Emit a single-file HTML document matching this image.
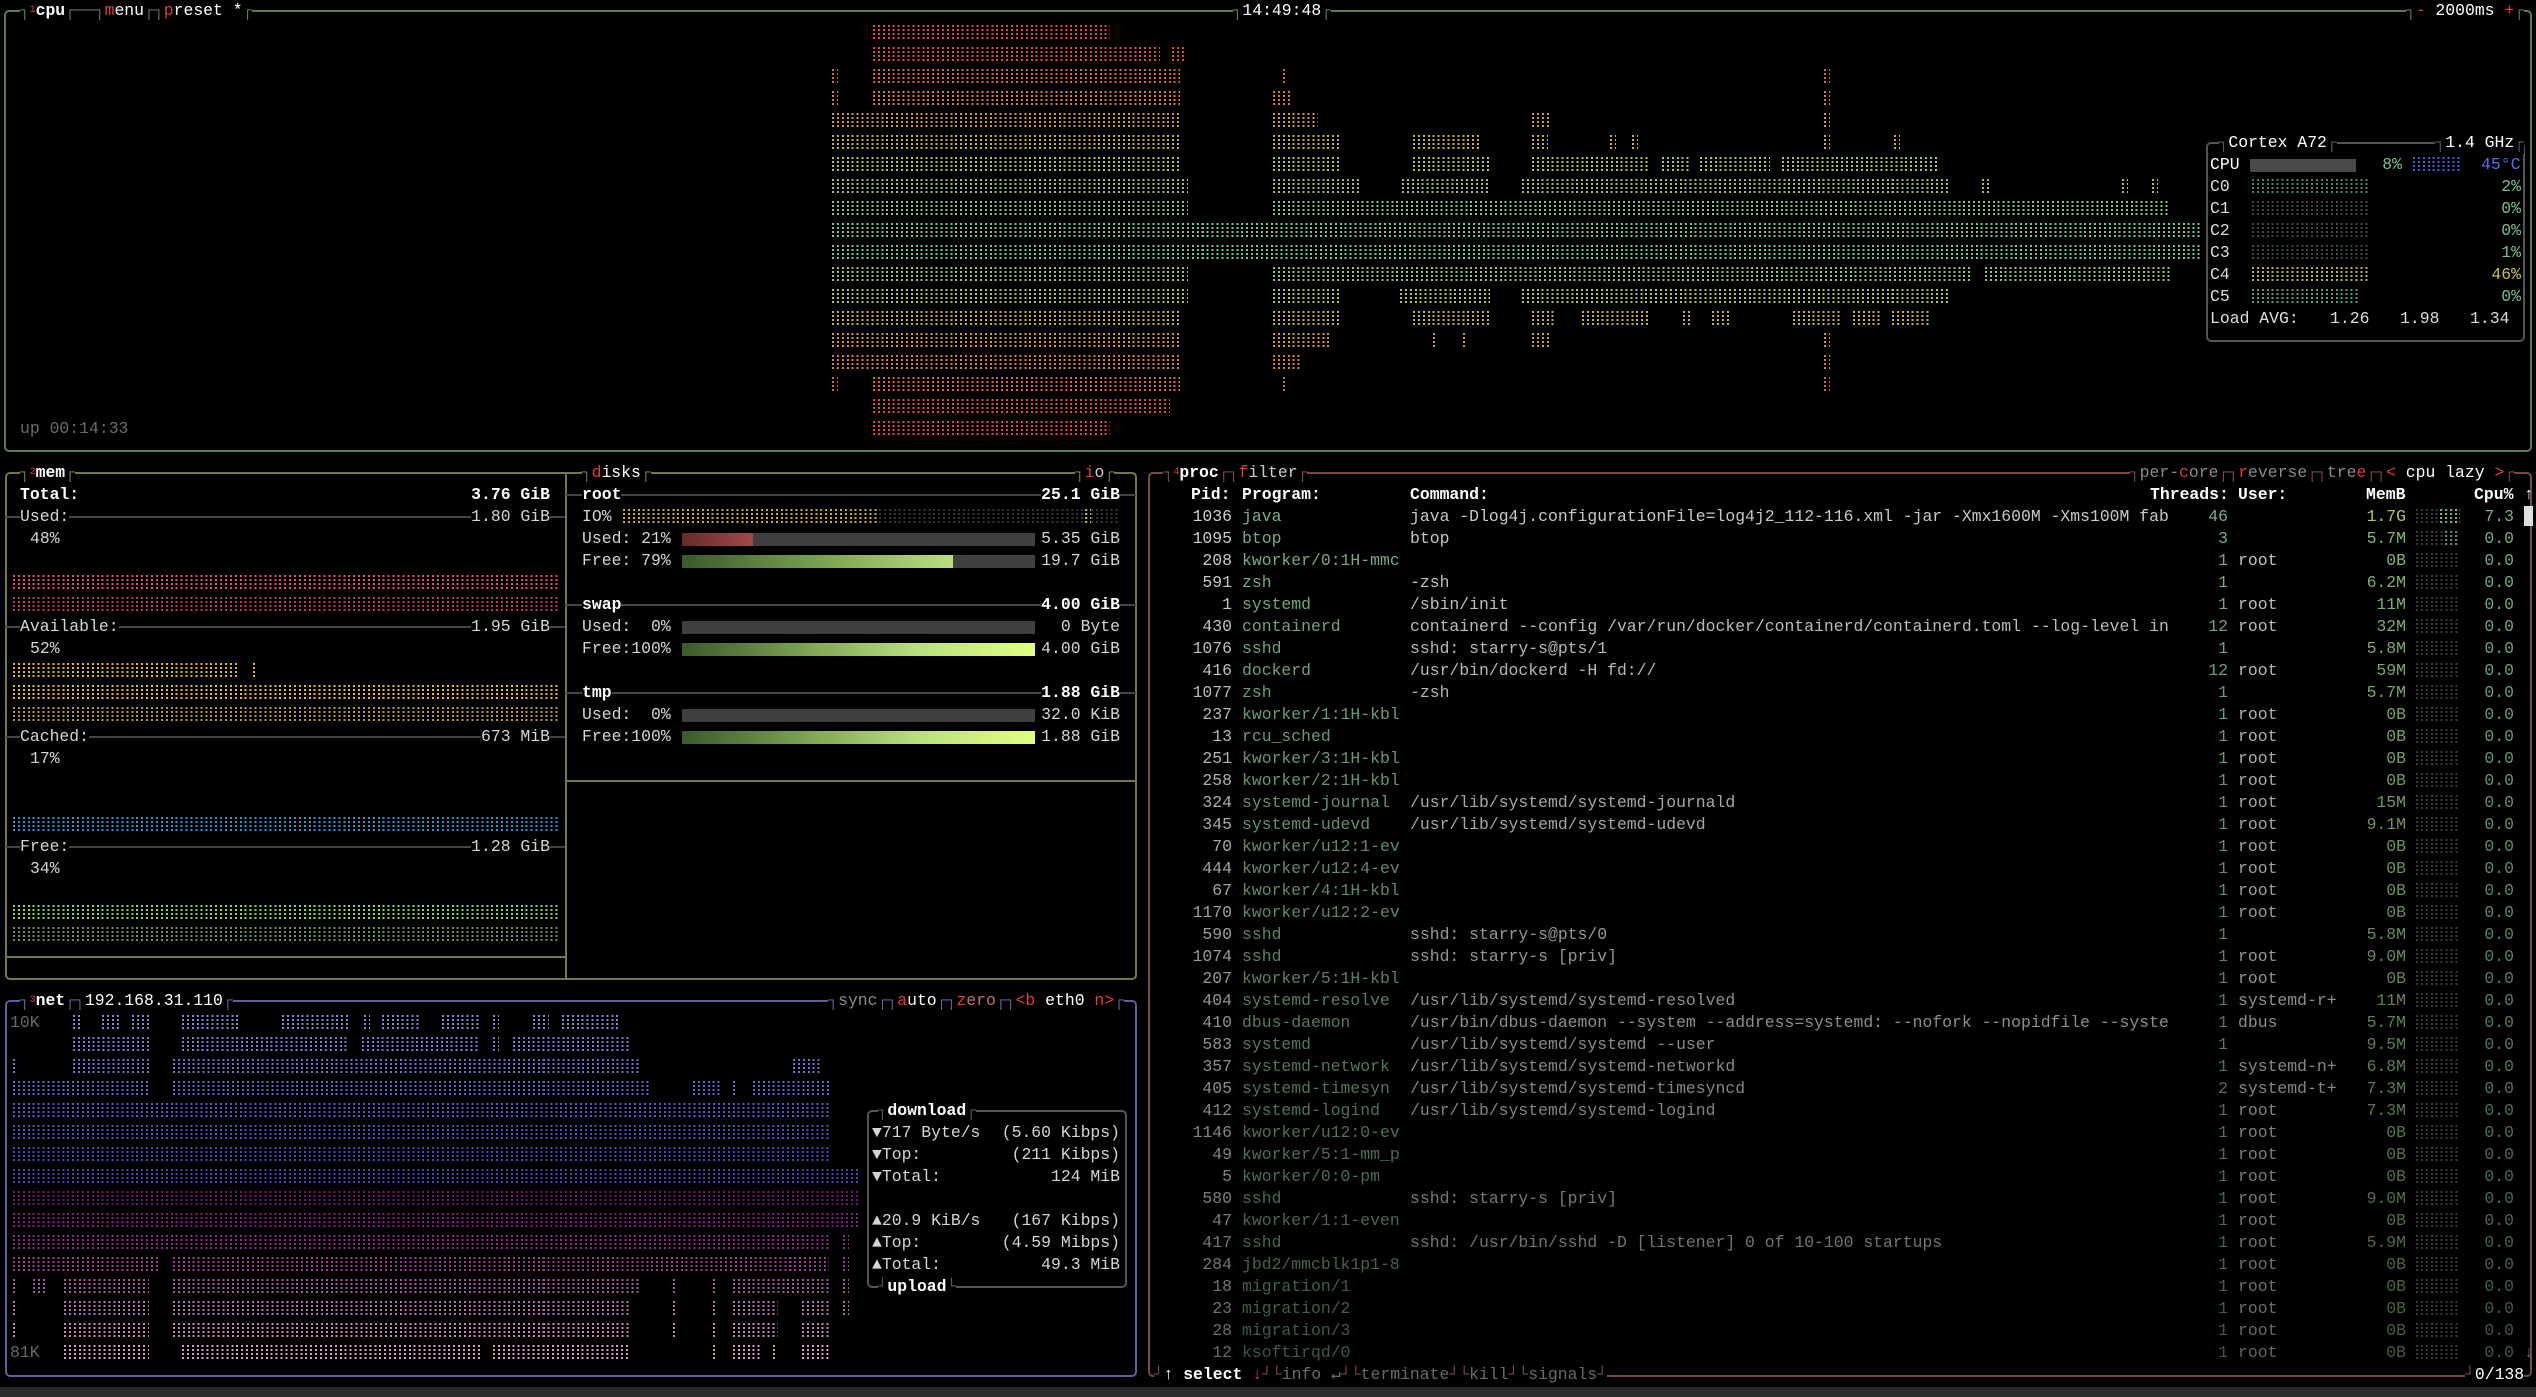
<!DOCTYPE html>
<html><head><meta charset="utf-8">
<style>
html,body{margin:0;padding:0}
body{background:#000;width:2536px;height:1397px;overflow:hidden;position:relative;font:16.43px/22px "Liberation Mono","DejaVu Sans Mono",monospace;color:#d4d4d4}
.t{position:absolute;white-space:pre;left:calc(var(--c)*9.86px);top:calc(var(--r)*22px)}
.p{position:absolute;white-space:pre}
.bx{position:absolute;border:2px solid;border-radius:5px;box-sizing:border-box}
.hl{position:absolute;height:2px}
.vl{position:absolute;width:2px}
.k{background:#000}
.w{color:#fff;font-weight:bold}
.red{color:#e03c3c}
.g{color:#8a8a8a}
.dg{color:#6a6a6a}
.br{position:absolute;height:16px;
 background:repeating-linear-gradient(90deg,var(--col) 0 2px,transparent 2px 4.93px);
 -webkit-mask-image:repeating-linear-gradient(180deg,#000 0 2px,transparent 2px 4px);
 mask-image:repeating-linear-gradient(180deg,#000 0 2px,transparent 2px 4px)}
.bar{position:absolute;height:13px}
.row{position:absolute;left:0;width:2536px;height:22px}
.row span{position:absolute;white-space:pre;top:0}
.pid{left:1140px;width:92px;text-align:right;color:#d0d0d0}
.prg{left:1242px;color:#78b088}
.cmd{left:1410px;color:#c8c8c8}
.thr{left:2150px;width:78px;text-align:right;color:#78b088}
.usr{left:2238px;color:#c8c8c8}
.mem{left:2330px;width:76px;text-align:right;color:#88b878}
.cpu{left:2470px;width:44px;text-align:right;color:#78b088}
</style></head><body>

<div class="bx" style="left:4px;top:10px;width:2528px;height:442px;border-color:#5a7a5a"></div>
<div class="bx" style="left:5px;top:472px;width:1132px;height:508px;border-color:#77774a"></div>
<div class="vl" style="left:565px;top:473px;height:506px;background:#77774a"></div>
<div class="hl" style="left:6px;top:956px;width:560px;background:#77774a"></div>
<div class="hl" style="left:566px;top:780px;width:570px;background:#77774a"></div>
<div class="bx" style="left:5px;top:1000px;width:1132px;height:377px;border-color:#5f5f99"></div>
<div class="bx" style="left:1148px;top:472px;width:1384px;height:905px;border-color:#7a4848"></div>
<div class="bx" style="left:2206px;top:142px;width:319px;height:200px;border-color:#555"></div>
<div class="bx" style="left:867px;top:1110px;width:260px;height:178px;border-color:#555"></div>
<div style="position:absolute;left:0;top:1387px;width:2536px;height:10px;background:#2a2a2a"></div>

<div class="t k" style="--c:2;--r:0;color:#5a7a5a">┐<span class="red" style="font-size:10px;vertical-align:top">1</span><span class="w">cpu</span>┌──┐<span class="red">m</span><span style="color:#fff">enu</span>┌┐<span class="red">p</span><span style="color:#fff">reset *</span>┌</div>
<div class="t k" style="--c:125;--r:0;color:#5a7a5a">┐<span style="color:#fff">14:49:48</span>┌</div>
<div class="t k" style="--c:244;--r:0;color:#5a7a5a">┐<span class="red">-</span> <span style="color:#fff">2000ms</span> <span class="red">+</span>┌</div>
<div class="p" style="left:20px;top:418px;color:#6a6a6a">up 00:14:33</div>

<div class="t k" style="--c:225;--r:6;color:#555">┐<span style="color:#fff">Cortex A72</span>┌</div>
<div class="t k" style="--c:247;--r:6;color:#555">┐<span style="color:#fff">1.4 GHz</span>┌</div>
<div class="p" style="left:2210px;top:154px;color:#fff">CPU</div>
<div class="bar" style="left:2250px;top:159px;width:106px;background:#4a4a4a"></div>
<div class="p" style="right:134px;top:154px;color:#78c090">8%</div>
<div class="p" style="left:2481px;top:154px;color:#5070f0">45°C</div>
<div class="p" style="left:2210px;top:176px;color:#ddd">C0</div><div class="p" style="right:15px;top:176px;color:#78c090">2%</div>
<div class="p" style="left:2210px;top:198px;color:#ddd">C1</div><div class="p" style="right:15px;top:198px;color:#78c090">0%</div>
<div class="p" style="left:2210px;top:220px;color:#ddd">C2</div><div class="p" style="right:15px;top:220px;color:#78c090">0%</div>
<div class="p" style="left:2210px;top:242px;color:#ddd">C3</div><div class="p" style="right:15px;top:242px;color:#78c090">1%</div>
<div class="p" style="left:2210px;top:264px;color:#ddd">C4</div><div class="p" style="right:15px;top:264px;color:#c8c060">46%</div>
<div class="p" style="left:2210px;top:286px;color:#ddd">C5</div><div class="p" style="right:15px;top:286px;color:#78c090">0%</div>
<div class="p" style="left:2210px;top:308px;color:#ddd">Load AVG:</div>
<div class="p" style="left:2330px;top:308px;color:#ddd">1.26</div>
<div class="p" style="left:2400px;top:308px;color:#ddd">1.98</div>
<div class="p" style="left:2470px;top:308px;color:#ddd">1.34</div>

<div class="t k" style="--c:2;--r:21;color:#77774a">┐<span class="red" style="font-size:10px;vertical-align:top">2</span><span class="w">mem</span>┌</div>
<div class="p w" style="left:20px;top:484px">Total:</div>
<div class="p w" style="right:1986px;top:484px">3.76 GiB</div>
<div class="hl" style="left:6px;top:516px;width:559px;background:#444"></div>
<div class="p k" style="left:20px;top:506px">Used:</div><div class="p k" style="right:1986px;top:506px">1.80 GiB</div>
<div class="p" style="left:30px;top:528px">48%</div>
<div class="hl" style="left:6px;top:626px;width:559px;background:#444"></div>
<div class="p k" style="left:20px;top:616px">Available:</div><div class="p k" style="right:1986px;top:616px">1.95 GiB</div>
<div class="p" style="left:30px;top:638px">52%</div>
<div class="hl" style="left:6px;top:736px;width:559px;background:#444"></div>
<div class="p k" style="left:20px;top:726px">Cached:</div><div class="p k" style="right:1986px;top:726px">673 MiB</div>
<div class="p" style="left:30px;top:748px">17%</div>
<div class="hl" style="left:6px;top:846px;width:559px;background:#444"></div>
<div class="p k" style="left:20px;top:836px">Free:</div><div class="p k" style="right:1986px;top:836px">1.28 GiB</div>
<div class="p" style="left:30px;top:858px">34%</div>

<div class="t k" style="--c:59;--r:21;color:#77774a">┐<span class="red">d</span><span style="color:#fff">isks</span>┌</div>
<div class="t k" style="--c:109;--r:21;color:#77774a">┐<span class="red">i</span><span style="color:#ccc">o</span>┌</div>
<div class="hl" style="left:566px;top:494px;width:570px;background:#444"></div>
<div class="p w k" style="left:582px;top:484px">root</div><div class="p w k" style="right:1416px;top:484px">25.1 GiB</div>
<div class="p" style="left:582px;top:506px">IO%</div>
<div class="p" style="left:582px;top:528px">Used: 21%</div>
<div class="bar" style="left:682px;top:533px;width:353px;background:#404040"></div>
<div class="bar" style="left:682px;top:533px;width:71px;background:linear-gradient(90deg,#6a2a2a,#a04848)"></div>
<div class="p" style="right:1416px;top:528px">5.35 GiB</div>
<div class="p" style="left:582px;top:550px">Free: 79%</div>
<div class="bar" style="left:682px;top:555px;width:353px;background:#404040"></div>
<div class="bar" style="left:682px;top:555px;width:271px;background:linear-gradient(90deg,#3a5a2a,#78a050,#b8e080)"></div>
<div class="p" style="right:1416px;top:550px">19.7 GiB</div>
<div class="hl" style="left:566px;top:604px;width:570px;background:#444"></div>
<div class="p w k" style="left:582px;top:594px">swap</div><div class="p w k" style="right:1416px;top:594px">4.00 GiB</div>
<div class="p" style="left:582px;top:616px">Used:  0%</div>
<div class="bar" style="left:682px;top:621px;width:353px;background:#404040"></div>
<div class="p" style="right:1416px;top:616px">0 Byte</div>
<div class="p" style="left:582px;top:638px">Free:100%</div>
<div class="bar" style="left:682px;top:643px;width:353px;background:linear-gradient(90deg,#3a5a2a,#78a050,#b8e080,#e0ff80)"></div>
<div class="p" style="right:1416px;top:638px">4.00 GiB</div>
<div class="hl" style="left:566px;top:692px;width:570px;background:#444"></div>
<div class="p w k" style="left:582px;top:682px">tmp</div><div class="p w k" style="right:1416px;top:682px">1.88 GiB</div>
<div class="p" style="left:582px;top:704px">Used:  0%</div>
<div class="bar" style="left:682px;top:709px;width:353px;background:#404040"></div>
<div class="p" style="right:1416px;top:704px">32.0 KiB</div>
<div class="p" style="left:582px;top:726px">Free:100%</div>
<div class="bar" style="left:682px;top:731px;width:353px;background:linear-gradient(90deg,#3a5a2a,#78a050,#b8e080,#e0ff80)"></div>
<div class="p" style="right:1416px;top:726px">1.88 GiB</div>

<div class="t k" style="--c:2;--r:45;color:#5f5f99">┐<span class="red" style="font-size:10px;vertical-align:top">3</span><span class="w">net</span>┌┐<span style="color:#fff">192.168.31.110</span>┌</div>
<div class="t k" style="--c:84;--r:45;color:#5f5f99">┐<span class="g">sync</span>┌┐<span class="red">a</span><span style="color:#fff">uto</span>┌┐<span class="red">z</span><span style="color:#c07080">ero</span>┌┐<span class="red">&lt;b</span> <span style="color:#fff">eth0</span> <span class="red">n&gt;</span>┌</div>
<div class="p dg" style="left:10px;top:1012px">10K</div>
<div class="p dg" style="left:10px;top:1342px">81K</div>
<div class="t k" style="--c:89;--r:50;color:#555">┐<span class="w">download</span>┌</div>
<div class="t k" style="--c:89;--r:58;color:#555">┘<span class="w">upload</span>└</div>
<div class="p" style="left:872px;top:1122px">▼717 Byte/s</div><div class="p" style="right:1416px;top:1122px">(5.60 Kibps)</div>
<div class="p" style="left:872px;top:1144px">▼Top:</div><div class="p" style="right:1416px;top:1144px">(211 Kibps)</div>
<div class="p" style="left:872px;top:1166px">▼Total:</div><div class="p" style="right:1416px;top:1166px">124 MiB</div>
<div class="p" style="left:872px;top:1210px">▲20.9 KiB/s</div><div class="p" style="right:1416px;top:1210px">(167 Kibps)</div>
<div class="p" style="left:872px;top:1232px">▲Top:</div><div class="p" style="right:1416px;top:1232px">(4.59 Mibps)</div>
<div class="p" style="left:872px;top:1254px">▲Total:</div><div class="p" style="right:1416px;top:1254px">49.3 MiB</div>

<div class="t k" style="--c:118;--r:21;color:#7a4848">┐<span class="red" style="font-size:10px;vertical-align:top">4</span><span class="w">proc</span>┌┐<span class="red">f</span><span style="color:#ccc">ilter</span>┌</div>
<div class="t k" style="--c:216;--r:21;color:#7a4848">┐<span class="g">per-</span><span class="red">c</span><span class="g">ore</span>┌┐<span class="red">r</span><span class="g">everse</span>┌┐<span class="g">tre</span><span class="red">e</span>┌┐<span class="red">&lt;</span> <span style="color:#fff">cpu lazy</span> <span class="red">&gt;</span>┌</div>
<div class="t k" style="--c:117;--r:62;color:#7a4848">┘<span style="color:#fff">↑</span> <span class="w">select</span> <span class="red">↓</span>┘└<span class="dg">info</span> <span class="dg">↵</span>┘└<span class="dg">terminate</span>┘└<span class="dg">kill</span>┘└<span class="dg">signals</span>┘</div>
<div class="t k" style="--c:250;--r:62;color:#7a4848">┘<span style="color:#fff">0/138</span></div>
<div class="row w" style="top:484px"><span style="left:1191px">Pid:</span><span style="left:1242px">Program:</span><span style="left:1410px">Command:</span><span style="left:2150px">Threads:</span><span style="left:2238px">User:</span><span style="left:2366px">MemB</span><span style="left:2474px">Cpu%</span><span style="left:2524px;font-weight:normal">↑</span></div>
<div style="position:absolute;left:2524px;top:506px;width:9px;height:20px;background:#ddd"></div>
<div class="p dg" style="left:2524px;top:1342px">↓</div>

<div id="procs">
<div class="row" style="top:506px"><span class="pid">1036</span><span class="prg">java</span><span class="cmd">java -Dlog4j.configurationFile=log4j2_112-116.xml -jar -Xmx1600M -Xms100M fab</span><span class="thr">46</span><span class="usr"></span><span class="mem" style="color:#c0c060">1.7G</span><span class="cpu">7.3</span></div>
<div class="row" style="top:528px"><span class="pid">1095</span><span class="prg">btop</span><span class="cmd">btop</span><span class="thr">3</span><span class="usr"></span><span class="mem">5.7M</span><span class="cpu">0.0</span></div>
<div class="row" style="top:550px"><span class="pid">208</span><span class="prg">kworker/0:1H-mmc</span><span class="cmd"></span><span class="thr">1</span><span class="usr">root</span><span class="mem">0B</span><span class="cpu">0.0</span></div>
<div class="row" style="top:572px"><span class="pid">591</span><span class="prg">zsh</span><span class="cmd">-zsh</span><span class="thr">1</span><span class="usr"></span><span class="mem">6.2M</span><span class="cpu">0.0</span></div>
<div class="row" style="top:594px"><span class="pid">1</span><span class="prg">systemd</span><span class="cmd">/sbin/init</span><span class="thr">1</span><span class="usr">root</span><span class="mem">11M</span><span class="cpu">0.0</span></div>
<div class="row" style="top:616px"><span class="pid">430</span><span class="prg">containerd</span><span class="cmd">containerd --config /var/run/docker/containerd/containerd.toml --log-level in</span><span class="thr">12</span><span class="usr">root</span><span class="mem">32M</span><span class="cpu">0.0</span></div>
<div class="row" style="top:638px"><span class="pid">1076</span><span class="prg">sshd</span><span class="cmd">sshd: starry-s@pts/1</span><span class="thr">1</span><span class="usr"></span><span class="mem">5.8M</span><span class="cpu">0.0</span></div>
<div class="row" style="top:660px"><span class="pid">416</span><span class="prg">dockerd</span><span class="cmd">/usr/bin/dockerd -H fd://</span><span class="thr">12</span><span class="usr">root</span><span class="mem">59M</span><span class="cpu">0.0</span></div>
<div class="row" style="top:682px"><span class="pid">1077</span><span class="prg">zsh</span><span class="cmd">-zsh</span><span class="thr">1</span><span class="usr"></span><span class="mem">5.7M</span><span class="cpu">0.0</span></div>
<div class="row" style="top:704px"><span class="pid">237</span><span class="prg">kworker/1:1H-kbl</span><span class="thr">1</span><span class="usr">root</span><span class="mem">0B</span><span class="cpu">0.0</span></div>
<div class="row" style="top:726px"><span class="pid">13</span><span class="prg">rcu_sched</span><span class="thr">1</span><span class="usr">root</span><span class="mem">0B</span><span class="cpu">0.0</span></div>
<div class="row" style="top:748px"><span class="pid">251</span><span class="prg">kworker/3:1H-kbl</span><span class="thr">1</span><span class="usr">root</span><span class="mem">0B</span><span class="cpu">0.0</span></div>
<div class="row" style="top:770px"><span class="pid">258</span><span class="prg">kworker/2:1H-kbl</span><span class="thr">1</span><span class="usr">root</span><span class="mem">0B</span><span class="cpu">0.0</span></div>
<div class="row" style="top:792px"><span class="pid">324</span><span class="prg">systemd-journal</span><span class="cmd">/usr/lib/systemd/systemd-journald</span><span class="thr">1</span><span class="usr">root</span><span class="mem">15M</span><span class="cpu">0.0</span></div>
<div class="row" style="top:814px"><span class="pid">345</span><span class="prg">systemd-udevd</span><span class="cmd">/usr/lib/systemd/systemd-udevd</span><span class="thr">1</span><span class="usr">root</span><span class="mem">9.1M</span><span class="cpu">0.0</span></div>
<div class="row" style="top:836px"><span class="pid">70</span><span class="prg">kworker/u12:1-ev</span><span class="thr">1</span><span class="usr">root</span><span class="mem">0B</span><span class="cpu">0.0</span></div>
<div class="row" style="top:858px"><span class="pid">444</span><span class="prg">kworker/u12:4-ev</span><span class="thr">1</span><span class="usr">root</span><span class="mem">0B</span><span class="cpu">0.0</span></div>
<div class="row" style="top:880px"><span class="pid">67</span><span class="prg">kworker/4:1H-kbl</span><span class="thr">1</span><span class="usr">root</span><span class="mem">0B</span><span class="cpu">0.0</span></div>
<div class="row" style="top:902px"><span class="pid">1170</span><span class="prg">kworker/u12:2-ev</span><span class="thr">1</span><span class="usr">root</span><span class="mem">0B</span><span class="cpu">0.0</span></div>
<div class="row" style="top:924px"><span class="pid">590</span><span class="prg">sshd</span><span class="cmd">sshd: starry-s@pts/0</span><span class="thr">1</span><span class="mem">5.8M</span><span class="cpu">0.0</span></div>
<div class="row" style="top:946px"><span class="pid">1074</span><span class="prg">sshd</span><span class="cmd">sshd: starry-s [priv]</span><span class="thr">1</span><span class="usr">root</span><span class="mem">9.0M</span><span class="cpu">0.0</span></div>
<div class="row" style="top:968px"><span class="pid">207</span><span class="prg">kworker/5:1H-kbl</span><span class="thr">1</span><span class="usr">root</span><span class="mem">0B</span><span class="cpu">0.0</span></div>
<div class="row" style="top:990px"><span class="pid">404</span><span class="prg">systemd-resolve</span><span class="cmd">/usr/lib/systemd/systemd-resolved</span><span class="thr">1</span><span class="usr">systemd-r+</span><span class="mem">11M</span><span class="cpu">0.0</span></div>
<div class="row" style="top:1012px"><span class="pid">410</span><span class="prg">dbus-daemon</span><span class="cmd">/usr/bin/dbus-daemon --system --address=systemd: --nofork --nopidfile --syste</span><span class="thr">1</span><span class="usr">dbus</span><span class="mem">5.7M</span><span class="cpu">0.0</span></div>
<div class="row" style="top:1034px"><span class="pid">583</span><span class="prg">systemd</span><span class="cmd">/usr/lib/systemd/systemd --user</span><span class="thr">1</span><span class="mem">9.5M</span><span class="cpu">0.0</span></div>
<div class="row" style="top:1056px"><span class="pid">357</span><span class="prg">systemd-network</span><span class="cmd">/usr/lib/systemd/systemd-networkd</span><span class="thr">1</span><span class="usr">systemd-n+</span><span class="mem">6.8M</span><span class="cpu">0.0</span></div>
<div class="row" style="top:1078px"><span class="pid">405</span><span class="prg">systemd-timesyn</span><span class="cmd">/usr/lib/systemd/systemd-timesyncd</span><span class="thr">2</span><span class="usr">systemd-t+</span><span class="mem">7.3M</span><span class="cpu">0.0</span></div>
<div class="row" style="top:1100px"><span class="pid">412</span><span class="prg">systemd-logind</span><span class="cmd">/usr/lib/systemd/systemd-logind</span><span class="thr">1</span><span class="usr">root</span><span class="mem">7.3M</span><span class="cpu">0.0</span></div>
<div class="row" style="top:1122px"><span class="pid">1146</span><span class="prg">kworker/u12:0-ev</span><span class="thr">1</span><span class="usr">root</span><span class="mem">0B</span><span class="cpu">0.0</span></div>
<div class="row" style="top:1144px"><span class="pid">49</span><span class="prg">kworker/5:1-mm_p</span><span class="thr">1</span><span class="usr">root</span><span class="mem">0B</span><span class="cpu">0.0</span></div>
<div class="row" style="top:1166px"><span class="pid">5</span><span class="prg">kworker/0:0-pm</span><span class="thr">1</span><span class="usr">root</span><span class="mem">0B</span><span class="cpu">0.0</span></div>
<div class="row" style="top:1188px"><span class="pid">580</span><span class="prg">sshd</span><span class="cmd">sshd: starry-s [priv]</span><span class="thr">1</span><span class="usr">root</span><span class="mem">9.0M</span><span class="cpu">0.0</span></div>
<div class="row" style="top:1210px"><span class="pid">47</span><span class="prg">kworker/1:1-even</span><span class="thr">1</span><span class="usr">root</span><span class="mem">0B</span><span class="cpu">0.0</span></div>
<div class="row" style="top:1232px"><span class="pid">417</span><span class="prg">sshd</span><span class="cmd">sshd: /usr/bin/sshd -D [listener] 0 of 10-100 startups</span><span class="thr">1</span><span class="usr">root</span><span class="mem">5.9M</span><span class="cpu">0.0</span></div>
<div class="row" style="top:1254px"><span class="pid">284</span><span class="prg">jbd2/mmcblk1p1-8</span><span class="thr">1</span><span class="usr">root</span><span class="mem">0B</span><span class="cpu">0.0</span></div>
<div class="row" style="top:1276px"><span class="pid">18</span><span class="prg">migration/1</span><span class="thr">1</span><span class="usr">root</span><span class="mem">0B</span><span class="cpu">0.0</span></div>
<div class="row" style="top:1298px"><span class="pid">23</span><span class="prg">migration/2</span><span class="thr">1</span><span class="usr">root</span><span class="mem">0B</span><span class="cpu">0.0</span></div>
<div class="row" style="top:1320px"><span class="pid">28</span><span class="prg">migration/3</span><span class="thr">1</span><span class="usr">root</span><span class="mem">0B</span><span class="cpu">0.0</span></div>
<div class="row" style="top:1342px"><span class="pid">12</span><span class="prg">ksoftirqd/0</span><span class="thr">1</span><span class="usr">root</span><span class="mem">0B</span><span class="cpu">0.0</span></div>
</div>

<div id="gr"></div>
<script>
(function(){
var gr=document.getElementById('gr'),h='';
function s(r,x1,x2,c,top){h+='<div class="br" style="left:'+x1+'px;width:'+(x2-x1)+'px;top:'+(top!=null?top:(r*22+3))+'px;--col:'+c+'"></div>';}
function rows(data,cols){for(var r in data){data[r].forEach(function(p){s(+r,p[0],p[1],cols[r]);});}}
var cc={1:'#e04848',2:'#d85048',3:'#d86840',4:'#d88040',5:'#d09840',6:'#c8b050',7:'#b8c060',8:'#a0c070',9:'#88c880',10:'#70c898',11:'#70c898',12:'#98c478',13:'#b8c060',14:'#c8b050',15:'#d09840',16:'#d88040',17:'#d86840',18:'#d85048',19:'#e04848'};
rows({
1:[[873,1110]],2:[[873,1160],[1172,1185]],
3:[[832,838],[873,1180],[1283,1288],[1824,1830]],
4:[[832,838],[873,1180],[1273,1290],[1824,1830]],
5:[[832,1180],[1273,1318],[1532,1550],[1824,1830]],
6:[[832,1180],[1273,1340],[1413,1480],[1532,1548],[1610,1616],[1632,1638],[1824,1830],[1894,1900]],
7:[[832,1180],[1273,1340],[1413,1490],[1532,1650],[1662,1690],[1700,1770],[1782,1940]],
8:[[832,1188],[1273,1360],[1402,1490],[1522,1950],[1982,1990],[2122,2128],[2152,2158]],
9:[[832,1188],[1273,2170]],10:[[832,2200]],11:[[832,2200]],
12:[[832,1188],[1273,1970],[1985,2170]],
13:[[832,1188],[1273,1340],[1400,1490],[1522,1950]],
14:[[832,1180],[1273,1340],[1413,1490],[1532,1555],[1582,1648],[1683,1690],[1712,1730],[1793,1840],[1853,1880],[1892,1930]],
15:[[832,1180],[1273,1330],[1433,1438],[1463,1468],[1532,1550],[1824,1830]],
16:[[832,1180],[1273,1300],[1824,1830]],
17:[[832,838],[873,1180],[1283,1288],[1824,1830]],
18:[[873,1170]],19:[[873,1110]]},cc);
s(0,2413,2460,'#4060e0',157);
s(0,2252,2370,'#4a8a5a',179);
s(0,2252,2370,'#3c4a42',201);s(0,2252,2370,'#3c4a42',223);s(0,2252,2370,'#3c4a42',245);
s(0,2252,2370,'#b8b050',267);s(0,2252,2360,'#50a080',289);
rows({26:[[13,560]],27:[[13,560]],30:[[13,240],[253,258]],31:[[13,560]],32:[[13,560]],37:[[13,560]],41:[[13,560]],42:[[13,560]]},
 {26:'#e05068',27:'#b84050',30:'#e8b040',31:'#e8b848',32:'#b89838',37:'#3090c8',41:'#88d860',42:'#6a9848'});
s(0,623,879,'#d0a838',509);s(0,879,1120,'#333',509);s(0,1085,1091,'#d0a838',509);
var nc={46:'#8888d8',47:'#7c7cd4',48:'#7070d0',49:'#6464cc',50:'#5858c8',51:'#5050c0',52:'#4848bc',53:'#4444b8',54:'#701870',55:'#802080',56:'#8a3088',57:'#984090',58:'#a8589c',59:'#b870ac',60:'#c888bc',61:'#d8a0cc'};
rows({
46:[[73,80],[102,120],[132,149],[182,240],[282,349],[364,370],[382,420],[442,480],[493,499],[533,549],[562,620]],
47:[[73,149],[182,349],[362,480],[493,499],[513,629]],
48:[[13,18],[73,149],[173,640],[793,820]],
49:[[13,149],[173,651],[693,720],[733,738],[753,829]],
50:[[13,829]],51:[[13,829]],52:[[13,829]],53:[[13,860]],54:[[13,860]],55:[[13,860]],
56:[[13,829],[843,849]],57:[[13,159],[173,829],[843,849]],
58:[[13,18],[33,47],[64,149],[173,640],[673,678],[713,718],[733,829],[843,849]],
59:[[13,18],[64,149],[173,629],[673,678],[713,718],[733,778],[802,829],[843,849]],
60:[[13,18],[64,149],[173,629],[673,678],[713,718],[733,778],[802,829]],
61:[[64,149],[182,480],[493,629],[713,718],[733,760],[773,778],[802,829]]},nc);
for(var r=23;r<=61;r++){s(r,2416,2460,'#3a3a3a');}
s(23,2440,2460,'#70b080');s(24,2445,2460,'#5a8a6a');
gr.innerHTML=h;
var pr=document.querySelectorAll('#procs .row');
for(var i=0;i<pr.length;i++){pr[i].style.opacity=(1-i*0.013).toFixed(3);}
})();
</script>
</body></html>
